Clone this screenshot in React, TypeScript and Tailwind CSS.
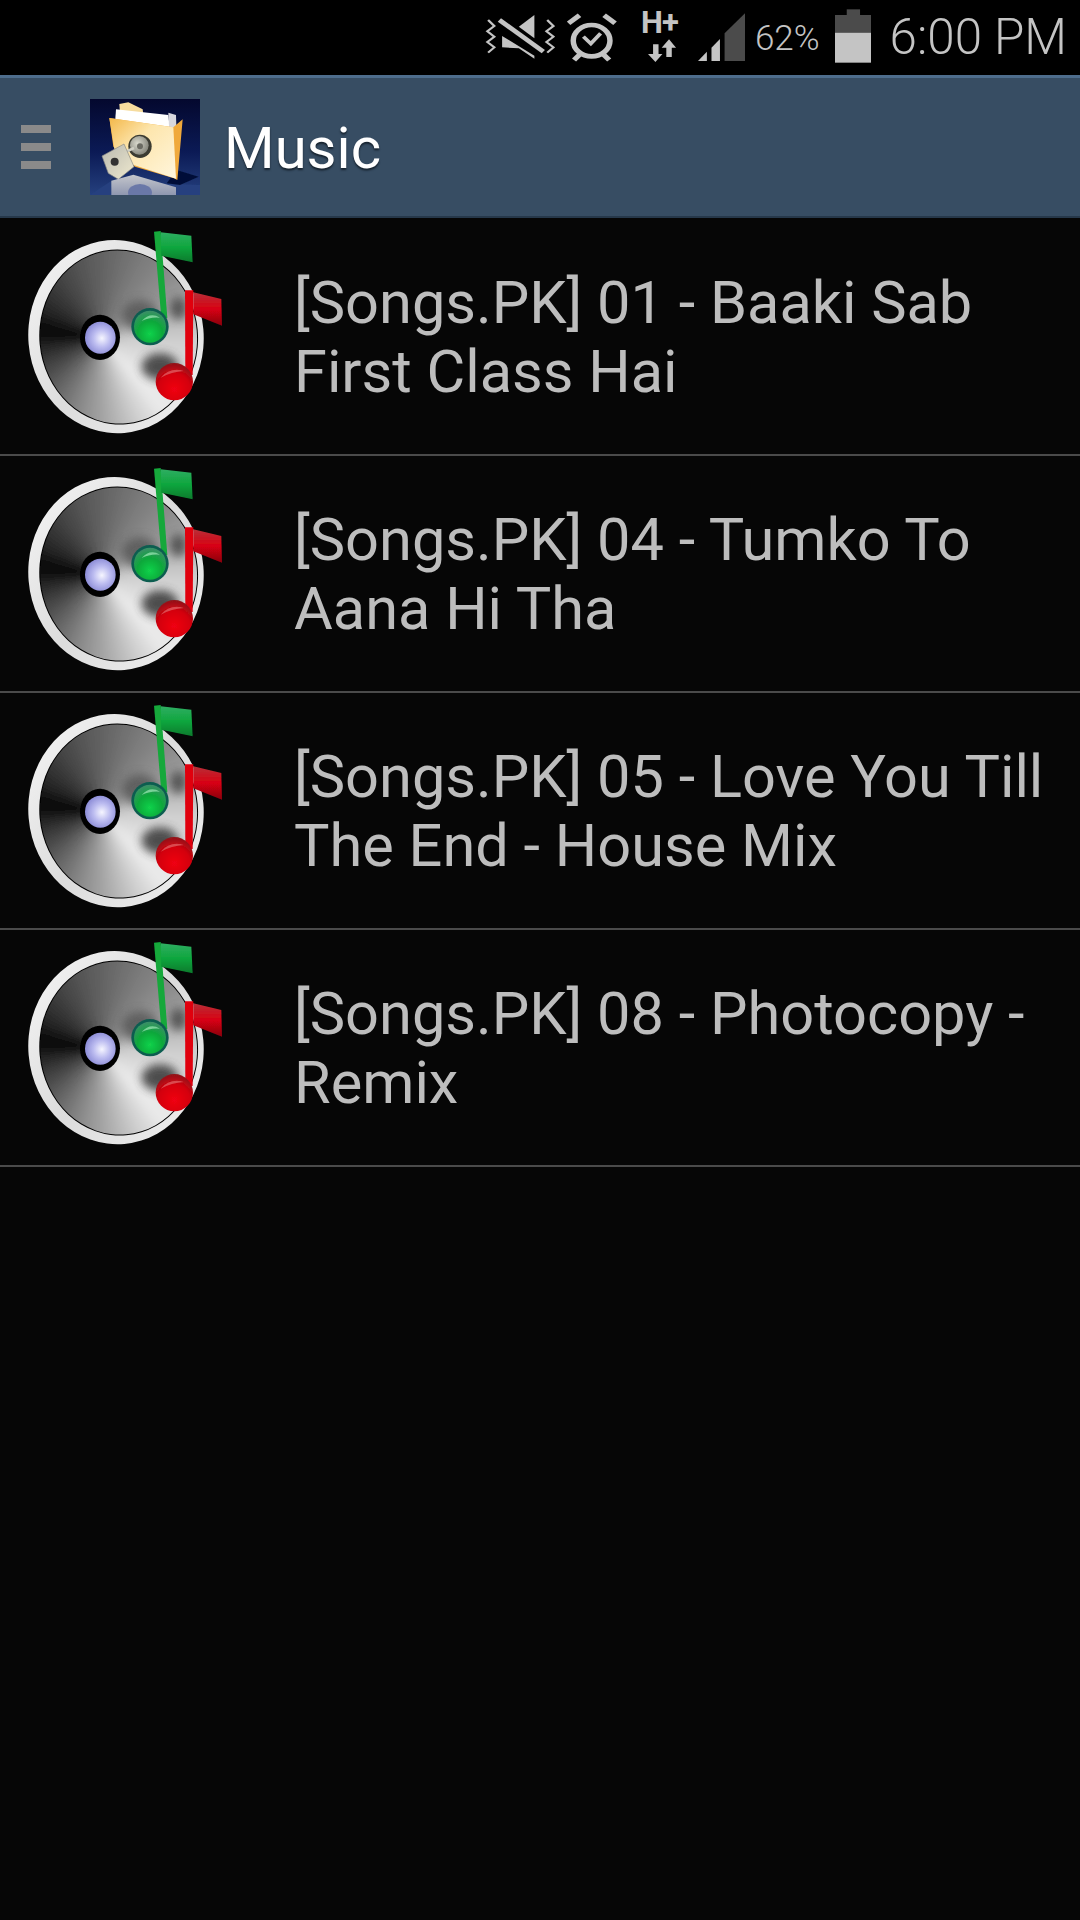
import React from "react";

const songs = [
  ["[Songs.PK] 01 - Baaki Sab", "First Class Hai"],
  ["[Songs.PK] 04 - Tumko To", "Aana Hi Tha"],
  ["[Songs.PK] 05 - Love You Till", "The End - House Mix"],
  ["[Songs.PK] 08 - Photocopy -", "Remix"],
];

function discColor(deg: number) {
  const stops: [number, number][] = [
    [0, 205], [50, 235], [85, 170], [120, 115], [160, 55], [186, 8], [205, 35], [250, 80], [290, 115], [330, 150], [360, 205],
  ];
  for (let i = 0; i < stops.length - 1; i++) {
    const [a, va] = stops[i];
    const [b, vb] = stops[i + 1];
    if (deg >= a && deg <= b) {
      const v = Math.round(va + ((vb - va) * (deg - a)) / (b - a));
      return `rgb(${v},${v},${v})`;
    }
  }
  return "rgb(200,200,200)";
}

const wedges = Array.from({ length: 72 }, (_, i) => {
  const a0 = ((i * 5 - 0.4) * Math.PI) / 180;
  const a1 = (((i + 1) * 5 + 0.4) * Math.PI) / 180;
  const r = 420;
  const cx = 300;
  const cy = 367;
  return {
    d: `M${cx} ${cy}L${cx + r * Math.cos(a0)} ${cy + r * Math.sin(a0)}L${cx + r * Math.cos(a1)} ${cy + r * Math.sin(a1)}Z`,
    fill: discColor(i * 5 + 2.5),
  };
});

function DiscIcon({ id }: { id: string }) {
  return (
    <svg viewBox="0 12 750 705" className="w-[250px] h-[235px] shrink-0" aria-hidden="true">
      <defs>
        <clipPath id={`${id}c`}>
          <ellipse cx="356" cy="366" rx="235" ry="260" transform="rotate(-5 356 366)" />
        </clipPath>
        <radialGradient id={`${id}g`} cx="0.5" cy="0.72" r="0.7">
          <stop offset="0" stopColor="#12d24a" />
          <stop offset="0.55" stopColor="#0ca83a" />
          <stop offset="1" stopColor="#3a8f66" />
        </radialGradient>
        <radialGradient id={`${id}r`} cx="0.5" cy="0.7" r="0.7">
          <stop offset="0" stopColor="#f00012" />
          <stop offset="0.6" stopColor="#d4000e" />
          <stop offset="1" stopColor="#8f1418" />
        </radialGradient>
        <radialGradient id={`${id}b`} cx="0.55" cy="0.52" r="0.55">
          <stop offset="0" stopColor="#f6f6ff" />
          <stop offset="0.5" stopColor="#bcbcf0" />
          <stop offset="1" stopColor="#8b8bd6" />
        </radialGradient>
        <linearGradient id={`${id}f`} x1="0" y1="0" x2="0" y2="1">
          <stop offset="0" stopColor="#2fae62" />
          <stop offset="0.5" stopColor="#0fa63e" />
          <stop offset="1" stopColor="#0a7a2c" />
        </linearGradient>
        <linearGradient id={`${id}h`} x1="0" y1="0" x2="0" y2="1">
          <stop offset="0" stopColor="#b83038" />
          <stop offset="0.5" stopColor="#d80012" />
          <stop offset="1" stopColor="#8a0010" />
        </linearGradient>
        <linearGradient id={`${id}e`} x1="0" y1="0" x2="1" y2="1">
          <stop offset="0" stopColor="#f6f6f6" />
          <stop offset="0.5" stopColor="#dcdcdc" />
          <stop offset="1" stopColor="#f0f0f0" />
        </linearGradient>
        <filter id={`${id}s`} x="-40%" y="-40%" width="180%" height="180%">
          <feGaussianBlur stdDeviation="14" />
        </filter>
        <filter id={`${id}w`} x="-20%" y="-20%" width="140%" height="140%">
          <feGaussianBlur stdDeviation="9" />
        </filter>
        <filter id={`${id}a`} x="-5%" y="-5%" width="110%" height="110%">
          <feGaussianBlur stdDeviation="2" />
        </filter>
      </defs>
      <g filter={`url(#${id}a)`}>
        <ellipse cx="348" cy="365" rx="263" ry="290" transform="rotate(-5 348 365)" fill={`url(#${id}e)`} />
        <ellipse cx="356" cy="366" rx="238" ry="263" transform="rotate(-5 356 366)" fill="#000" />
        <g clipPath={`url(#${id}c)`}>
          <g filter={`url(#${id}w)`}>
            {wedges.map((w, i) => (
              <path key={i} d={w.d} fill={w.fill} />
            ))}
          </g>
          <ellipse cx="420" cy="300" rx="55" ry="45" fill="#555" opacity="0.8" filter={`url(#${id}s)`} />
          <ellipse cx="480" cy="455" rx="55" ry="40" fill="#3c3c3c" opacity="0.9" filter={`url(#${id}s)`} />
          <ellipse cx="535" cy="280" rx="26" ry="34" fill="#4a4a4a" opacity="0.85" filter={`url(#${id}s)`} />
        </g>
        <ellipse cx="300" cy="367" rx="60" ry="68" fill="#000" />
        <ellipse cx="301" cy="368" rx="46" ry="48" fill={`url(#${id}b)`} />
        <path d="M462 50 L482 48 L502 310 L484 310 Z" fill="#12a83a" />
        <path d="M482 52 L574 62 L578 142 L484 122 Z" fill={`url(#${id}f)`} />
        <circle cx="450" cy="335" r="56" fill="#0b5d50" />
        <circle cx="450" cy="335" r="48" fill={`url(#${id}g)`} />
        <path d="M425 318 Q450 290 480 308 Q450 305 425 318 Z" fill="#9fe8b8" opacity="0.7" />
        <path d="M555 226 L580 226 L578 480 L556 480 Z" fill="#e00010" />
        <path d="M580 232 L664 252 L666 332 L580 298 Z" fill={`url(#${id}h)`} />
        <circle cx="523" cy="500" r="56" fill={`url(#${id}r)`} />
        <path d="M482 488 Q510 455 552 468 Q515 470 482 488 Z" fill="#e87a7a" opacity="0.6" />
      </g>
    </svg>
  );
}

function FolderIcon() {
  return (
    <svg viewBox="270 87 330 288" preserveAspectRatio="none" className="w-[110px] h-[96px] shrink-0" aria-hidden="true">
      <defs>
        <linearGradient id="bgf" x1="0" y1="0" x2="0" y2="1">
          <stop offset="0" stopColor="#04082e" />
          <stop offset="0.55" stopColor="#0b1a55" />
          <stop offset="1" stopColor="#25407e" />
        </linearGradient>
        <linearGradient id="fol" x1="0" y1="0" x2="1" y2="1">
          <stop offset="0" stopColor="#f3b84a" />
          <stop offset="0.4" stopColor="#fde6ae" />
          <stop offset="1" stopColor="#fff6dc" />
        </linearGradient>
        <linearGradient id="key" x1="0" y1="0" x2="1" y2="1">
          <stop offset="0" stopColor="#b8b8b0" />
          <stop offset="1" stopColor="#efe9ce" />
        </linearGradient>
        <radialGradient id="lock" cx="0.4" cy="0.4" r="0.6">
          <stop offset="0" stopColor="#d8d8cc" />
          <stop offset="1" stopColor="#8a8a80" />
        </radialGradient>
        <linearGradient id="refl" x1="0" y1="0" x2="0" y2="1">
          <stop offset="0" stopColor="#c4c6cc" />
          <stop offset="1" stopColor="#8f97b0" />
        </linearGradient>
        <filter id="fsoft" x="-5%" y="-5%" width="110%" height="110%">
          <feGaussianBlur stdDeviation="2" />
        </filter>
      </defs>
      <rect x="270" y="87" width="330" height="288" fill="url(#bgf)" />
      <g filter="url(#fsoft)">
        <path d="M270 375 L330 335 L600 345 L600 375 Z" fill="#26407f" />
        <path d="M530 300 L596 320 L540 345 L500 340 Z" fill="#061038" />
        <path d="M358 102 L385 97 L428 118 L430 135 L360 130 Z" fill="#f6dc9e" />
        <path d="M348 118 L505 135 L510 180 L345 160 Z" fill="#ffffff" />
        <path d="M505 128 L528 135 L530 200 L508 190 Z" fill="#d8d8de" />
        <path d="M328 144 L520 172 L548 148 L532 330 L522 325 L405 290 L340 230 Z" fill="#f0a93a" />
        <path d="M328 144 L520 172 L528 326 L348 268 Z" fill="url(#fol)" />
        <circle cx="420" cy="229" r="35" fill="#3a3a30" />
        <circle cx="418" cy="226" r="28" fill="url(#lock)" />
        <circle cx="420" cy="229" r="9" fill="#6a6a62" />
        <path d="M372 248 L402 234" stroke="#cfcfc4" strokeWidth="8" />
        <path d="M306 258 L372 222 L402 290 L355 328 L325 310 Z" fill="url(#key)" stroke="#8a8a84" strokeWidth="2" />
        <circle cx="344" cy="275" r="12" fill="#333" />
        <path d="M334 332 L400 314 L528 352 L528 375 L334 375 Z" fill="url(#refl)" />
        <ellipse cx="420" cy="368" rx="36" ry="26" fill="#6b78a8" />
      </g>
    </svg>
  );
}

function SpeakerIcon() {
  return (
    <svg viewBox="38 0 180 225" preserveAspectRatio="none" className="w-[70px] h-[75px] shrink-0" aria-hidden="true">
      <path d="M125 80 L165 45 L165 115 Z" fill="#c4c4c4" />
      <path d="M82 108 L165 167 L165 176 L125 145 L82 142 Z" fill="#c4c4c4" />
      <path d="M75 60 L188 155" stroke="#c4c4c4" strokeWidth="13" />
      <path d="M46 60 L62 78 L44 94 L62 110 L44 126 L62 142 L46 158" fill="none" stroke="#c4c4c4" strokeWidth="6" />
      <path d="M198 60 L214 78 L196 94 L214 110 L196 126 L214 142 L198 158" fill="none" stroke="#c4c4c4" strokeWidth="6" />
    </svg>
  );
}

function AlarmIcon() {
  return (
    <svg viewBox="250 0 128 225" preserveAspectRatio="none" className="w-[50px] h-[75px] shrink-0" aria-hidden="true">
      <ellipse cx="313" cy="122" rx="47" ry="47" fill="none" stroke="#c4c4c4" strokeWidth="14" />
      <path d="M254 70 L282 46" stroke="#c4c4c4" strokeWidth="14" />
      <path d="M373 70 L345 46" stroke="#c4c4c4" strokeWidth="14" />
      <path d="M268 180 L282 164" stroke="#c4c4c4" strokeWidth="14" />
      <path d="M358 180 L344 164" stroke="#c4c4c4" strokeWidth="14" />
      <path d="M292 110 L311 131 L336 100" fill="none" stroke="#c4c4c4" strokeWidth="10" />
    </svg>
  );
}

function NetIcon() {
  return (
    <div className="w-[37px] h-[75px] flex flex-col items-center shrink-0">
      <span className="mt-[10px] h-[26px] text-[31px] leading-[26px] font-bold text-[#c4c4c4] font-['Roboto',sans-serif] tracking-[-1px]">
        H+
      </span>
      <svg viewBox="445 110 95 85" preserveAspectRatio="none" className="w-[37px] h-[28px]" aria-hidden="true">
        <path d="M476 135 H490 V165 H500 L482 189 L463 165 H476 Z" fill="#c4c4c4" />
        <path d="M510 174 H524 V146 H535 L517 120 L498 146 H510 Z" fill="#c4c4c4" />
      </svg>
    </div>
  );
}

function SignalIcon() {
  return (
    <svg viewBox="585 0 122 225" preserveAspectRatio="none" className="w-[47px] h-[75px] shrink-0" aria-hidden="true">
      <path d="M585 183 L608 155 V183 Z" fill="#c4c4c4" />
      <path d="M620 143 L642 117 V183 H620 Z" fill="#c4c4c4" />
      <path d="M654 100 L707 40 V183 H654 Z" fill="#4b4b4b" />
    </svg>
  );
}

function BatteryIcon() {
  return (
    <svg viewBox="938 0 92 225" preserveAspectRatio="none" className="w-[36px] h-[75px] shrink-0" aria-hidden="true">
      <rect x="968" y="28" width="34" height="18" fill="#4b4b4b" />
      <rect x="938" y="45" width="92" height="53" fill="#4b4b4b" />
      <rect x="938" y="98" width="92" height="90" fill="#c4c4c4" />
    </svg>
  );
}

export default function App() {
  return (
    <div className="w-[1080px] h-[1920px] bg-[#060606] flex flex-col font-['Roboto',sans-serif] overflow-hidden">
      <div className="h-[75px] bg-black flex items-center justify-end pr-[13px] shrink-0">
        <SpeakerIcon />
        <div className="ml-[12px]"><AlarmIcon /></div>
        <div className="ml-[24px]"><NetIcon /></div>
        <div className="ml-[20px]"><SignalIcon /></div>
        <span className="ml-[10px] text-[35px] leading-[75px] text-[#c4c4c4] font-light pt-[2px]">62%</span>
        <div className="ml-[15px]"><BatteryIcon /></div>
        <span className="ml-[19px] text-[49.3px] leading-[75px] text-[#c4c4c4] font-light">6:00 PM</span>
      </div>
      <div className="h-[143px] bg-[#374d63] border-t-[3px] border-t-[#4e6d8c] border-b-[2px] border-b-[#26384a] flex items-center shrink-0">
        <div className="ml-[21px] w-[30px] flex flex-col gap-[10px]">
          <div className="h-[8px] bg-[#8a8a8a]" />
          <div className="h-[8px] bg-[#8a8a8a]" />
          <div className="h-[8px] bg-[#8a8a8a]" />
        </div>
        <div className="ml-[39px]"><FolderIcon /></div>
        <span className="ml-[24px] pt-[2px] text-[58px] leading-none text-white [text-shadow:0_2px_2px_#16222e]">Music</span>
      </div>
      <div className="flex flex-col mt-[1px]">
        {songs.map((s, i) => (
          <div key={i} className="h-[237px] border-b-2 border-b-[#4a4a4a] flex items-center">
            <DiscIcon id={`d${i}`} />
            <div className="ml-[44px] pt-[3px] text-[59.5px] leading-[69px] text-[#bdbdbd]">
              <div>{s[0]}</div>
              <div>{s[1]}</div>
            </div>
          </div>
        ))}
      </div>
    </div>
  );
}
